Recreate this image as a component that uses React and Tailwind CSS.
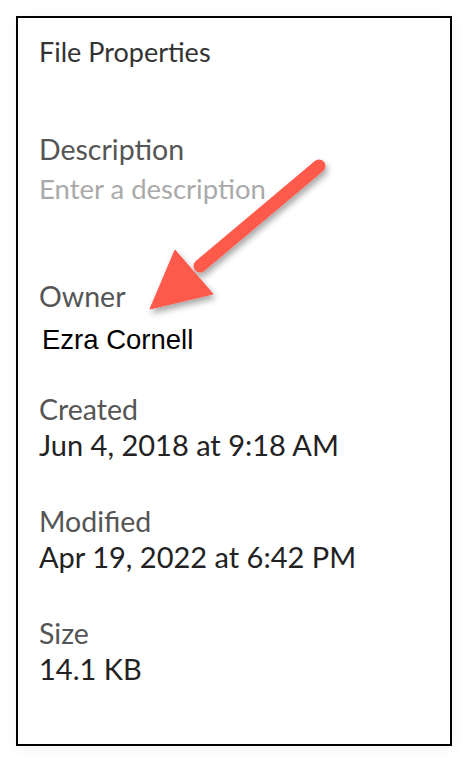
import React from 'react';

const lato = "font-['Lato','Open_Sans',sans-serif]";

// one label/value pair of the properties panel
const Field = ({ label, value, className = '' }) => (
  <div className={className}>
    <div className="text-[28.5px] leading-[36px] text-[#555555]">{label}</div>
    <div className="text-[29px] leading-[36px] text-[#222222]">{value}</div>
  </div>
);

const Arrow = () => (
  <svg
    className="absolute left-0 top-0 pointer-events-none"
    width="468"
    height="762"
    viewBox="0 0 468 762"
  >
    <defs>
      <filter id="arrowShadow" x="-20%" y="-20%" width="150%" height="150%">
        <feDropShadow dx="2" dy="4" stdDeviation="3" floodColor="#000" floodOpacity="0.35" />
      </filter>
    </defs>
    <g filter="url(#arrowShadow)" fill="#fd5a4c" stroke="#fd5a4c">
      <line x1="319" y1="166" x2="200" y2="266" strokeWidth="13" strokeLinecap="round" />
      <polygon points="175,250 213,294 150,309" strokeWidth="1" strokeLinejoin="miter" />
    </g>
  </svg>
);

export default function App() {
  return (
    <div className={`relative w-[468px] h-[762px] bg-white ${lato}`}>
      <div className="absolute left-0 top-0 w-[468px] h-[762px] pt-[16px] pl-[16px]">
        <div className="w-[436px] h-[730px] border-2 border-black bg-white shadow-[0_2px_14px_rgba(0,0,0,0.06)] pl-[21px] pt-[18px]">
          <div className="text-[27px] leading-[32px] text-[#333333]">File Properties</div>

          <div className="mt-[63px]">
            <div className="text-[28.5px] leading-[36px] text-[#555555]">Description</div>
            <div className="mt-[4px] text-[27.5px] leading-[36px] text-[#aaaaaa]">Enter a description</div>
          </div>

          <div className="mt-[71px]">
            <div className="text-[28.5px] leading-[36px] text-[#555555]">Owner</div>
            <div className="mt-[8px] pl-[3px] font-['Liberation_Sans',Arial,sans-serif] text-[27.5px] leading-[36px] text-black">
              Ezra Cornell
            </div>
          </div>

          <Field className="mt-[33px]" label="Created" value="Jun 4, 2018 at 9:18 AM" />
          <Field className="mt-[40px]" label="Modified" value="Apr 19, 2022 at 6:42 PM" />
          <Field className="mt-[40px]" label="Size" value="14.1 KB" />
        </div>
      </div>
      <Arrow />
    </div>
  );
}
